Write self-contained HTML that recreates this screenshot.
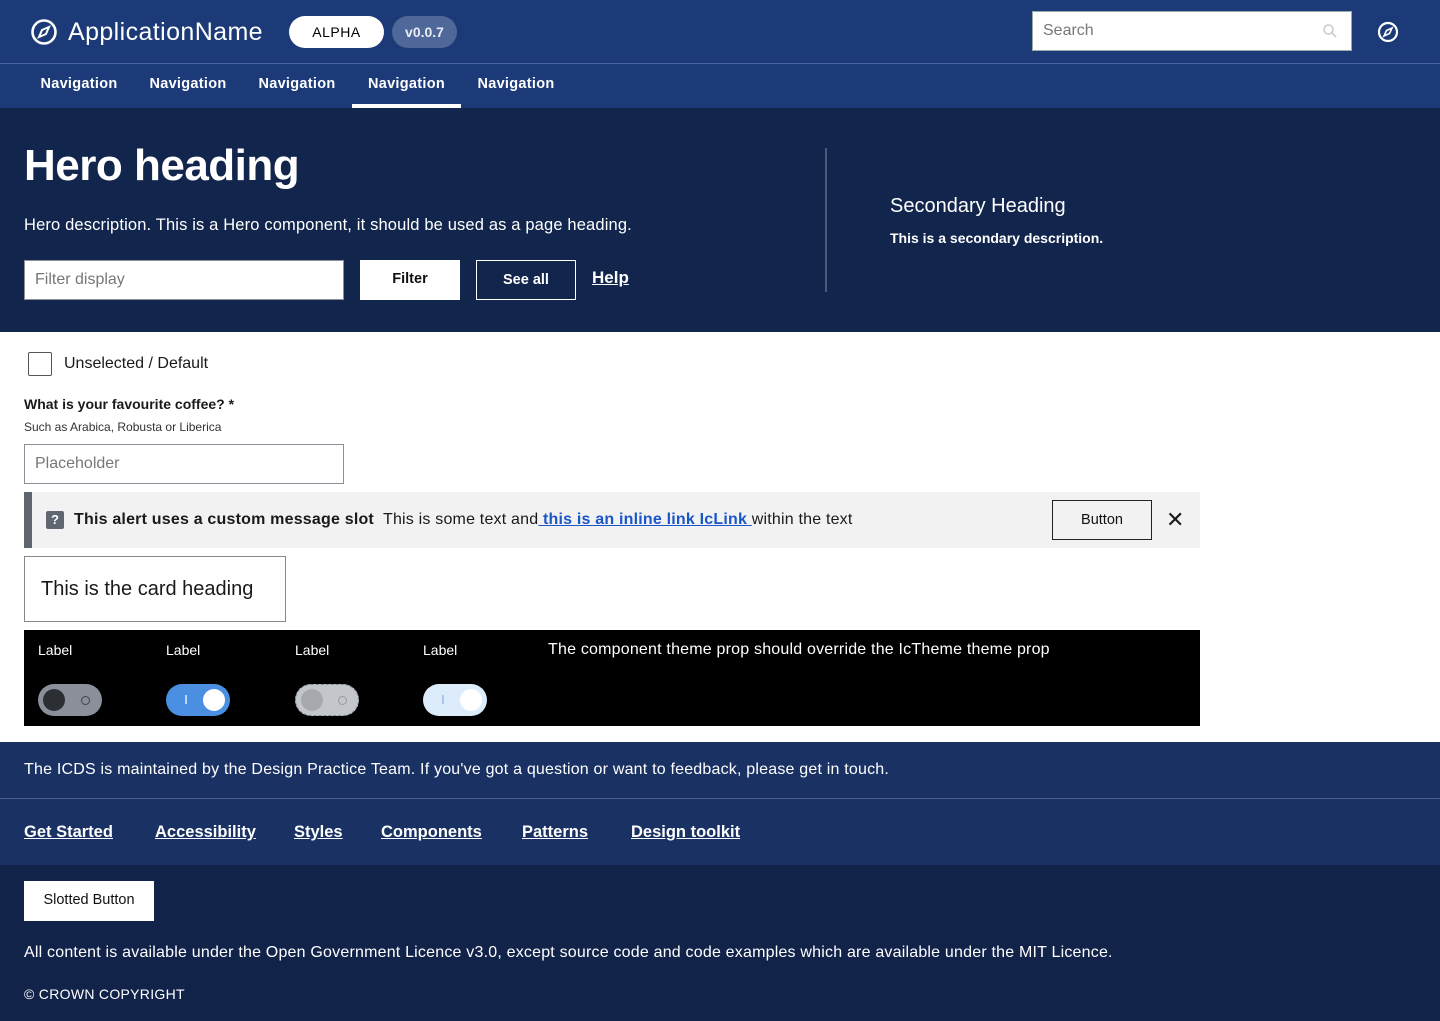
<!DOCTYPE html>
<html><head><meta charset="utf-8"><style>
*{box-sizing:border-box;margin:0;padding:0}
body{width:1440px;height:1021px;font-family:"Liberation Sans",sans-serif;background:#fff;color:#1a1a1a;overflow:hidden;position:relative}
.abs{position:absolute}
.hdr{position:absolute;left:0;top:0;width:1440px;height:108px;background:#1c3a78}
.hdr .line{position:absolute;left:0;top:63px;width:1440px;height:1px;background:#4a64a0}
.nav{position:absolute;top:64px;height:44px;color:#fff;font-size:14.5px;font-weight:bold;letter-spacing:.3px;line-height:40px;text-align:center}
.hero{position:absolute;left:0;top:108px;width:1440px;height:224px;background:#12254d;color:#fff}
.btn{position:absolute;font-size:14.5px;font-weight:bold;text-align:center;line-height:38px;height:40px}
.inp{position:absolute;border:1px solid #8a8f99;background:#fff;color:#777;font-size:16px;padding-left:10px;line-height:38px;height:40px}
a{color:inherit}
.fl span{position:absolute;text-decoration:underline}
</style></head><body>
<div class="hdr">
  <svg class="abs" style="left:30px;top:18px" width="28" height="28" viewBox="0 0 28 28"><circle cx="14" cy="14" r="11.5" fill="none" stroke="#fff" stroke-width="2.6"/><path d="M19 9 L16 16 L9 19 L12 12 Z" fill="none" stroke="#fff" stroke-width="2"/></svg>
  <div class="abs" style="left:68px;top:14px;color:#fff;font-size:25px;line-height:36px;letter-spacing:.4px">ApplicationName</div>
  <div class="abs" style="left:289px;top:16px;width:95px;height:32px;border-radius:16px;background:#fff;color:#000;font-size:14px;text-align:center;line-height:32px;letter-spacing:.5px">ALPHA</div>
  <div class="abs" style="left:392px;top:16px;width:65px;height:32px;border-radius:16px;background:#4e6899;color:#e8ecf4;font-size:14px;font-weight:bold;text-align:center;line-height:32px">v0.0.7</div>
  <div class="abs" style="left:1032px;top:11px;width:320px;height:40px;background:#fff;border:1px solid #9aa;color:#777;font-size:16px;padding-left:10px;line-height:38px">Search</div>
  <svg class="abs" style="left:1322px;top:23px" width="16" height="16" viewBox="0 0 16 16"><circle cx="6.5" cy="6.5" r="4.5" fill="none" stroke="#ccc" stroke-width="1.6"/><path d="M10 10 L14 14" stroke="#ccc" stroke-width="1.8"/></svg>
  <svg class="abs" style="left:1377px;top:21px" width="22" height="22" viewBox="0 0 22 22"><circle cx="11" cy="11" r="9" fill="none" stroke="#fff" stroke-width="2.2"/><path d="M15 7 L12.5 12.5 L7 15 L9.5 9.5 Z" fill="none" stroke="#fff" stroke-width="1.6"/></svg>
  <div class="line"></div>
  <div class="nav" style="left:24px;width:110px">Navigation</div>
  <div class="nav" style="left:133px;width:110px">Navigation</div>
  <div class="nav" style="left:242px;width:110px">Navigation</div>
  <div class="nav" style="left:352px;width:109px">Navigation</div>
  <div class="abs" style="left:352px;top:104px;width:109px;height:4px;background:#fff"></div>
  <div class="nav" style="left:461px;width:110px">Navigation</div>
</div>
<div class="hero">
  <div class="abs" style="left:24px;top:32px;font-size:44px;font-weight:bold;line-height:52px;letter-spacing:-.5px">Hero heading</div>
  <div class="abs" style="left:24px;top:105px;font-size:16.5px;line-height:24px;letter-spacing:.15px">Hero description. This is a Hero component, it should be used as a page heading.</div>
  <div class="inp" style="left:24px;top:152px;width:320px">Filter display</div>
  <div class="btn" style="left:360px;top:152px;width:100px;background:#fff;color:#111">Filter</div>
  <div class="btn" style="left:476px;top:152px;width:100px;border:1px solid #fff;color:#fff">See all</div>
  <div class="abs" style="left:592px;top:160px;font-size:17px;font-weight:bold;text-decoration:underline">Help</div>
  <div class="abs" style="left:825px;top:40px;width:2px;height:144px;background:#4a5a7a"></div>
  <div class="abs" style="left:890px;top:84px;font-size:20px;line-height:28px">Secondary Heading</div>
  <div class="abs" style="left:890px;top:120px;font-size:14px;font-weight:bold;line-height:20px">This is a secondary description.</div>
</div>
<div class="abs" style="left:28px;top:352px;width:24px;height:24px;border:1px solid #555;border-radius:2px"></div>
<div class="abs" style="left:64px;top:353px;font-size:16px;line-height:22px">Unselected / Default</div>
<div class="abs" style="left:24px;top:394px;font-size:14px;font-weight:bold;line-height:20px">What is your favourite coffee? *</div>
<div class="abs" style="left:24px;top:419px;font-size:12px;line-height:16px;color:#333">Such as Arabica, Robusta or Liberica</div>
<div class="inp" style="left:24px;top:444px;width:320px">Placeholder</div>
<div class="abs" style="left:24px;top:492px;width:1176px;height:56px;background:#f2f2f2;border-left:8px solid #5f6670"></div>
<div class="abs" style="left:46px;top:511px;width:18px;height:18px;background:#5f6670;color:#fff;font-size:13px;font-weight:bold;text-align:center;line-height:18px;border-radius:2px">?</div>
<div class="abs" style="left:74px;top:509px;font-size:16px;line-height:22px;white-space:nowrap;letter-spacing:.2px"><b>This alert uses a custom message slot</b>&nbsp; This is some text and<a style="color:#1a56c8;font-weight:bold" href="#"> this is an inline link IcLink </a>within the text</div>
<div class="btn" style="left:1052px;top:500px;width:100px;border:1px solid #222;font-weight:normal;color:#111">Button</div>
<div class="abs" style="left:1166px;top:508px;font-size:22px;line-height:24px">✕</div>
<div class="abs" style="left:24px;top:556px;width:262px;height:66px;border:1px solid #888;font-size:20px;padding-left:16px;line-height:64px">This is the card heading</div>
<div class="abs" style="left:24px;top:630px;width:1176px;height:96px;background:#000;color:#fff">
  <div class="abs" style="left:14px;top:12px;font-size:14px">Label</div>
  <div class="abs" style="left:142px;top:12px;font-size:14px">Label</div>
  <div class="abs" style="left:271px;top:12px;font-size:14px">Label</div>
  <div class="abs" style="left:399px;top:12px;font-size:14px">Label</div>
  <div class="abs" style="left:524px;top:11px;font-size:16px;letter-spacing:.2px">The component theme prop should override the IcTheme theme prop</div>
  <div class="abs" style="left:14px;top:54px;width:64px;height:32px;border-radius:16px;background:#8a8f99"><div class="abs" style="left:5px;top:5px;width:22px;height:22px;border-radius:50%;background:#2b2e33"></div><div class="abs" style="left:43px;top:12px;width:9px;height:9px;border-radius:50%;border:1px solid #444"></div></div>
  <div class="abs" style="left:142px;top:54px;width:64px;height:32px;border-radius:16px;background:#4a8fe2"><div class="abs" style="left:19px;top:11px;width:2px;height:9px;background:#bcd6f5"></div><div class="abs" style="left:37px;top:5px;width:22px;height:22px;border-radius:50%;background:#fff"></div></div>
  <div class="abs" style="left:271px;top:54px;width:64px;height:32px;border-radius:16px;background:#c3c6cb;border:1px dashed #888"><div class="abs" style="left:5px;top:4px;width:22px;height:22px;border-radius:50%;background:#a6a9ae"></div><div class="abs" style="left:42px;top:11px;width:9px;height:9px;border-radius:50%;border:1px solid #999"></div></div>
  <div class="abs" style="left:399px;top:54px;width:64px;height:32px;border-radius:16px;background:#ddecfb"><div class="abs" style="left:19px;top:11px;width:2px;height:9px;background:#a9c8ee"></div><div class="abs" style="left:37px;top:5px;width:22px;height:22px;border-radius:50%;background:#fff"></div></div>
</div>
<div class="abs" style="left:0;top:742px;width:1440px;height:123px;background:#1a3263;color:#fff">
  <div class="abs" style="left:24px;top:17px;font-size:16px;line-height:22px;letter-spacing:.2px">The ICDS is maintained by the Design Practice Team. If you've got a question or want to feedback, please get in touch.</div>
  <div class="abs" style="left:0;top:56px;width:1440px;height:1px;background:#4a5f8a"></div>
  <div class="abs fl" style="left:24px;top:79px;font-size:16.5px;font-weight:bold;line-height:22px;white-space:nowrap">
    <span style="left:0">Get Started</span><span style="left:131px">Accessibility</span><span style="left:270px">Styles</span><span style="left:357px">Components</span><span style="left:498px">Patterns</span><span style="left:607px">Design toolkit</span>
  </div>
</div>
<div class="abs" style="left:0;top:865px;width:1440px;height:156px;background:#12234a;color:#fff">
  <div class="btn" style="left:24px;top:16px;width:130px;background:#fff;color:#111;font-weight:normal;font-size:14.5px">Slotted Button</div>
  <div class="abs" style="left:24px;top:77px;font-size:16px;line-height:22px;letter-spacing:.2px">All content is available under the Open Government Licence v3.0, except source code and code examples which are available under the MIT Licence.</div>
  <div class="abs" style="left:24px;top:119px;font-size:14px;line-height:20px;letter-spacing:.3px">© CROWN COPYRIGHT</div>
</div>
</body></html>
